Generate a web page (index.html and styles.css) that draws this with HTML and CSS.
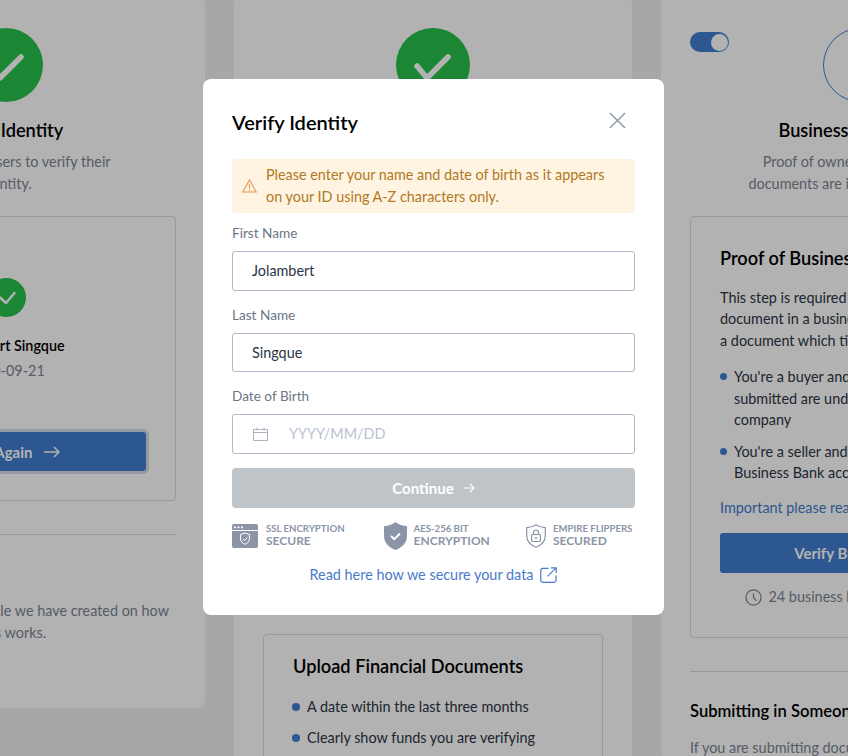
FILE: index.html
```html
<!DOCTYPE html>
<html lang="en">
<head>
<meta charset="utf-8">
<title>Verify Identity</title>
<link rel="stylesheet" href="styles.css">
</head>
<body>
<main class="track">
  <section class="card card-short">
    <svg class="badge" viewBox="0 0 74 74"><circle cx="37" cy="37" r="37" fill="#27c24c"/><path d="M21 38l10 12 21-21" class="badge-tick"/></svg>
    <h2 class="card-title">Verify Identity</h2>
    <p class="card-desc">That requires users to verify their<br>identity.</p>
    <div class="box box-id">
      <svg class="mini-badge" viewBox="0 0 39 39"><circle cx="19.5" cy="19.5" r="19.5" fill="#27c24c"/><path d="M13 19.5l6 5.500 8.500-10" class="mini-tick"/></svg>
      <div class="id-name">Jolambert Singque</div>
      <div class="id-date">1990-09-21</div>
      <button class="btn btn-focus" type="button">Verify Again
        <svg class="btn-arrow" viewBox="0 0 16 12"><path d="M0 6h15M10 1l5 5-5 5"/></svg>
      </button>
    </div>
    <hr class="rule rule-a">
    <h3 class="sub-title">Guide</h3>
    <p class="sub-text">Please check out this article we have created on how<br>the ID verification process works.</p>
  </section>

  <section class="card">
    <svg class="badge" viewBox="0 0 74 74"><circle cx="37" cy="37" r="37" fill="#27c24c"/><path d="M21 38l10 12 21-21" class="badge-tick"/></svg>
    <div class="box box-upload">
      <h3 class="box-title">Upload Financial Documents</h3>
      <ul class="ticks ticks-wide">
        <li>A date within the last three months</li>
        <li>Clearly show funds you are verifying</li>
        <li>Show your full name and address</li>
      </ul>
    </div>
  </section>

  <section class="card">
    <span class="toggle"><span class="toggle-knob"></span></span>
    <svg class="badge" viewBox="0 0 74 74"><circle cx="37" cy="37" r="36.500" fill="none" stroke="#407dd0"/></svg>
    <h2 class="card-title">Business Ownership</h2>
    <p class="card-desc">Proof of ownership of business<br>documents are important for a sale.</p>
    <div class="box box-proof">
      <h3 class="box-title">Proof of Business Ownership</h3>
      <p class="proof-text">This step is required if you are named as a<br>document in a business which is owned by<br>a document which ties you to the company.</p>
      <ul class="ticks ticks-proof">
        <li>You're a buyer and the funds to be<br>submitted are under your registered<br>company</li>
        <li>You're a seller and you are using a<br>Business Bank account</li>
      </ul>
      <a class="proof-link" href="#">Important please read this first</a>
      <button class="btn btn-wide" type="button">Verify Business Info</button>
      <div class="eta">
        <svg class="eta-icon" viewBox="0 0 18 18"><circle cx="9" cy="9" r="8"/><path d="M9 4.500V9l3 3.500"/></svg>
        <span>24 business hours response time</span>
      </div>
    </div>
    <hr class="rule rule-b">
    <h3 class="sub-title sub-title-b">Submitting in Someone Else's Name</h3>
    <p class="sub-text sub-text-b">If you are submitting documents for</p>
  </section>
</main>

<div class="overlay">
  <div class="modal">
    <div class="modal-head">
      <h1 class="modal-title">Verify Identity</h1>
      <svg class="close" viewBox="0 0 18 18"><path d="M1 1l16 16M17 1L1 17"/></svg>
    </div>
    <div class="alert">
      <svg class="alert-icon" viewBox="0 0 16 15"><path d="M8 1L15.300 14H.7z"/><path d="M8 5.500v4.500M8 11.200v1.300"/></svg>
      <p class="alert-text">Please enter your name and date of birth as it appears on your ID using A-Z characters only.</p>
    </div>
    <label class="field-label">First Name</label>
    <div class="input"><span class="input-value">Jolambert</span></div>
    <label class="field-label">Last Name</label>
    <div class="input"><span class="input-value">Singque</span></div>
    <label class="field-label">Date of Birth</label>
    <div class="input">
      <svg class="cal" viewBox="0 0 15 14"><path d="M.5 2.500h14v11H.5zM.5 5.500h14M4 .5v3M11 .5v3"/></svg>
      <span class="input-placeholder">YYYY/MM/DD</span>
    </div>
    <button class="btn-continue" type="button">Continue
      <svg class="continue-arrow" viewBox="0 0 12 10"><path d="M.5 5h10.500M7 1l4 4-4 4"/></svg>
    </button>
    <div class="trust">
      <div class="trust-item">
        <svg class="trust-ssl" viewBox="0 0 26 24">
          <rect width="26" height="24" rx="2" fill="#8b95a7"/>
          <path d="M0 6.500h26" stroke="#fff" stroke-width="1"/>
          <circle cx="3" cy="3.300" r="1.100" fill="#fff"/><circle cx="6.500" cy="3.300" r="1.100" fill="#fff"/><circle cx="10" cy="3.300" r="1.100" fill="#fff"/>
          <path d="M13 9l4.500 1.500v4c0 3-2 4.800-4.500 5.800-2.500-1-4.500-2.800-4.500-5.800v-4z" fill="none" stroke="#fff"/>
          <path d="M10.800 14.800l1.700 1.700 2.900-3" fill="none" stroke="#fff"/>
        </svg>
        <div class="trust-text"><span class="trust-top">SSL ENCRYPTION</span><span class="trust-main">SECURE</span></div>
      </div>
      <div class="trust-item trust-aes">
        <svg class="trust-shield" viewBox="0 0 23 28">
          <path d="M11.500 0C14.500 2.500 19 4 23 4.300V14c0 7-5 11.500-11.500 14C5 25.500 0 21 0 14V4.300C4 4 8.500 2.500 11.500 0z" fill="#8b95a7"/>
          <path d="M7 14l3.200 3.200L16 11.500" fill="none" stroke="#fff" stroke-width="2"/>
        </svg>
        <div class="trust-text"><span class="trust-top">AES-256 BIT</span><span class="trust-main">ENCRYPTION</span></div>
      </div>
      <div class="trust-item trust-ef">
        <svg class="trust-lock" viewBox="0 0 20 24">
          <path d="M10 .7c2.500 1.700 5.500 2.700 9.300 3V12c0 5.500-4 9-9.300 11.300C4.700 21 .7 17.500.7 12V3.700C4.500 3.400 7.500 2.400 10 .7z" fill="none" stroke="#8b95a7" stroke-width="1.200"/>
          <rect x="5.600" y="10.500" width="8.800" height="7" rx="1" fill="none" stroke="#8b95a7" stroke-width="1.200"/>
          <path d="M7.500 10.500V8.500a2.500 2.500 0 0 1 5 0v2" fill="none" stroke="#8b95a7" stroke-width="1.200"/>
          <circle cx="10" cy="14" r="1" fill="#8b95a7"/>
        </svg>
        <div class="trust-text"><span class="trust-top">EMPIRE FLIPPERS</span><span class="trust-main">SECURED</span></div>
      </div>
    </div>
    <a class="secure-link" href="#">Read here how we secure your data
      <svg class="ext" viewBox="0 0 18 17"><path d="M9 1.500H3A2.200 2.200 0 0 0 .8 3.700v10.600a2.200 2.200 0 0 0 2.200 2h11.800a2.200 2.200 0 0 0 2.200-2V9"/><path d="M8 10l9-9M11.500 1h5.700v5.500"/></svg>
    </a>
  </div>
</div>
</body>
</html>
```

FILE: styles.css
```css
* { box-sizing: border-box; }
html, body { margin: 0; height: 756px; overflow: hidden; }
body {
  position: relative;
  background: #edf0f3;
  font-family: "Lato", "Liberation Sans", sans-serif;
  font-size: 14.400px;
  color: #2b3544;
}
h1, h2, h3, p, ul { margin: 0; padding: 0; }

.track {
  display: flex;
  align-items: flex-start;
  gap: 29px;
  width: 1300px;
  margin: -4px 0 0 -193px;
}
.card {
  position: relative;
  flex: 0 0 398px;
  display: flex;
  flex-direction: column;
  align-items: center;
  padding: 32px 29px 0;
  background: #fff;
  border-radius: 8px;
}
.card-short { padding-bottom: 64px; }
.badge { width: 74px; height: 74px; display: block; flex: none; }
.badge-tick { fill: none; stroke: #fff; stroke-width: 5.500; stroke-linecap: round; stroke-linejoin: round; }
.card-title { margin-top: 15px; font-size: 18.200px; line-height: 26px; font-weight: 600; color: #000; text-align: center; white-space: nowrap; }
.card-desc { margin-top: 8px; margin-bottom: -1px; line-height: 22px; color: #7c8592; text-align: center; }

.box { width: 340px; border: 1px solid #d8dbe0; border-radius: 4px; }
.box-id {
  margin-top: 22px;
  padding: 61px 29px 29px;
  display: flex;
  flex-direction: column;
  align-items: center;
}
.mini-badge { width: 39px; height: 39px; display: block; }
.mini-tick { fill: none; stroke: #fff; stroke-width: 2.500; stroke-linecap: round; stroke-linejoin: round; }
.id-name { margin-top: 18px; line-height: 22px; font-weight: 600; color: #000; }
.id-date { margin-top: 3px; line-height: 22px; color: #7c8592; }

.btn {
  display: flex;
  align-items: center;
  justify-content: center;
  gap: 12px;
  width: 280px;
  height: 39px;
  border: 0;
  border-radius: 3px;
  background: #407dd0;
  color: #fff;
  font: 700 15px "Lato", sans-serif;
}
.btn-focus { margin-top: 50px; box-shadow: 0 0 0 3px #d5dbe8; }
.btn-wide { margin-top: 15px; height: 40px; }
.btn-arrow { width: 16px; height: 12px; fill: none; stroke: #fff; stroke-width: 1.500; }

.rule { width: 340px; margin: 0; border: 0; border-top: 1px solid #d8dbe0; flex: none; }
.rule-a { margin-top: 33px; }
.rule-b { margin-top: 33px; }
.sub-title { width: 340px; margin-top: 24px; line-height: 26px; font-size: 16.600px; font-weight: 600; color: #000; }
.sub-title-b { margin-top: 26px; }
.sub-text { width: 340px; margin-top: 15px; line-height: 22px; color: #7c8592; }
.sub-text-b { margin-top: 13px; }

.box-upload { margin-top: 532px; padding: 18px 29px 20px; }
.box-title { font-size: 18.200px; line-height: 26px; font-weight: 600; color: #000; }
.ticks { list-style: none; color: #2b3544; }
.ticks li { position: relative; padding-left: 14px; line-height: 21.500px; }
.ticks li::before {
  content: "";
  position: absolute;
  left: 0;
  top: 7px;
  width: 7px;
  height: 7px;
  border-radius: 50%;
  background: #407dd0;
}
.ticks-wide { margin-top: 17px; }
.ticks-wide li { line-height: 22px; margin-bottom: 9px; }
.ticks-wide li::before { left: -1px; width: 8px; height: 8px; }
.ticks-proof { margin-top: 15px; }
.ticks-proof li + li { margin-top: 10px; }

.box-proof { margin-top: 22px; padding: 28px 29px 29px; }
.proof-text { margin-top: 15.500px; line-height: 21.500px; white-space: nowrap; }
.ticks-proof li { white-space: nowrap; }
.proof-link { display: block; margin-top: 13px; line-height: 21.500px; color: #407dd0; text-decoration: none; }
.eta { display: flex; align-items: center; justify-content: center; gap: 6px; margin-top: 13px; line-height: 22px; color: #7c8592; }
.eta-icon { width: 17px; height: 17px; fill: none; stroke: #7c8592; stroke-width: 1.300; }

.toggle {
  position: absolute;
  left: 29px;
  top: 36px;
  width: 39px;
  height: 20px;
  border-radius: 10px;
  background: #407dd0;
}
.toggle-knob {
  position: absolute;
  right: 1px;
  top: 1.500px;
  width: 17px;
  height: 17px;
  border-radius: 50%;
  background: #fff;
}

.overlay { position: absolute; inset: 0; background: rgba(0, 0, 0, 0.3); }
.modal {
  position: absolute;
  left: 203px;
  top: 79px;
  width: 461px;
  height: 536px;
  padding: 28px 29px 29px;
  background: #fff;
  border-radius: 8px;
  display: flex;
  flex-direction: column;
}
.modal-head { display: flex; align-items: center; justify-content: space-between; height: 30px; }
.modal-title { font-size: 20px; line-height: 30px; font-weight: 600; color: #000; }
.close { width: 17px; height: 17px; margin: -3px 9px 0 0; fill: none; stroke: #8e99a8; stroke-width: 1.500; }

.alert {
  display: flex;
  align-items: center;
  gap: 9px;
  height: 54px;
  margin-top: 22px;
  padding: 0 24px 0 10px;
  background: #fff3e2;
  border-radius: 3px;
}
.alert-icon { width: 15px; height: 14px; flex: none; fill: none; stroke: #e8934a; stroke-width: 1.100; }
.alert-text { line-height: 22px; color: #b07a25; }

.field-label { display: block; margin-top: 14px; line-height: 20px; font-size: 13.600px; color: #6b7686; }
.alert + .field-label { margin-top: 10px; }
.input {
  display: flex;
  align-items: center;
  height: 39.500px;
  margin-top: 8px;
  padding: 0 19px;
  border: 1px solid #aeb8c8;
  border-radius: 3px;
}
.input-value { color: #2b3544; }
.cal { width: 15px; height: 14px; margin-left: 1px; fill: none; stroke: #a9b3c2; }
.input-placeholder { margin-left: 21px; color: #b8c2d0; }

.btn-continue {
  display: flex;
  align-items: center;
  justify-content: center;
  gap: 9px;
  height: 40px;
  margin-top: 14.500px;
  border: 0;
  border-radius: 4px;
  background: #bfc4c8;
  color: #fff;
  font: 700 15px "Lato", sans-serif;
}
.continue-arrow { width: 12px; height: 10px; fill: none; stroke: #fff; stroke-width: 1.100; }

.trust { display: flex; align-items: center; height: 28px; margin-top: 14px; }
.trust-item { display: flex; align-items: center; gap: 7px; }
.trust-aes { margin-left: 39px; }
.trust-ef { margin-left: 36px; }
.trust-ssl { width: 26px; height: 24px; margin-right: 1px; }
.trust-shield { width: 23px; height: 28px; }
.trust-lock { width: 20px; height: 24px; }
.trust-text { display: flex; flex-direction: column; padding-bottom: 2px; color: #8b95a7; font-weight: 700; }
.trust-top { font-size: 9.600px; line-height: 12px; }
.trust-main { font-size: 12px; line-height: 12px; }

.secure-link {
  display: flex;
  align-items: center;
  justify-content: center;
  gap: 7px;
  margin-top: 14px;
  line-height: 22px;
  color: #4a7bc8;
  text-decoration: none;
}
.ext { width: 17px; height: 16px; fill: none; stroke: #4a7bc8; stroke-width: 1.300; }
```
